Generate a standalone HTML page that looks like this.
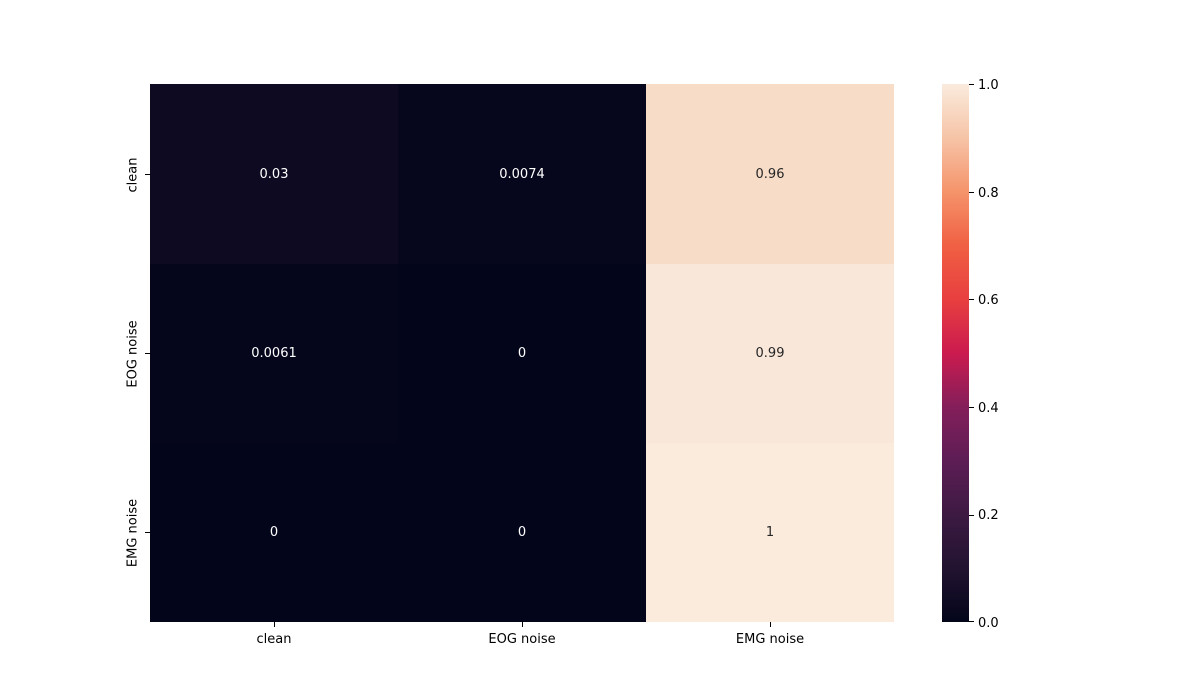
<!DOCTYPE html>
<html><head><style>
body{margin:0;width:1200px;height:700px;background:#fff;position:relative;font-family:"DejaVu Sans","Liberation Sans",sans-serif;font-size:13px;color:#000;overflow:hidden}
.c{position:absolute;display:flex;align-items:center;justify-content:center}
.t{position:absolute;white-space:nowrap}
.tk{position:absolute;background:#000}
</style></head><body>
<div class="c" style="left:150px;top:84px;width:248px;height:180px;background:#0d0a21;color:#fff">0.03</div>
<div class="c" style="left:398px;top:84px;width:248px;height:180px;background:#06061c;color:#fff">0.0074</div>
<div class="c" style="left:646px;top:84px;width:248px;height:180px;background:#f7dcc8;color:#262626">0.96</div>
<div class="c" style="left:150px;top:264px;width:248px;height:179px;background:#05061c;color:#fff">0.0061</div>
<div class="c" style="left:398px;top:264px;width:248px;height:179px;background:#03051a;color:#fff">0</div>
<div class="c" style="left:646px;top:264px;width:248px;height:179px;background:#f9e7da;color:#262626">0.99</div>
<div class="c" style="left:150px;top:443px;width:248px;height:179px;background:#03051a;color:#fff">0</div>
<div class="c" style="left:398px;top:443px;width:248px;height:179px;background:#03051a;color:#fff">0</div>
<div class="c" style="left:646px;top:443px;width:248px;height:179px;background:#faebdd;color:#262626">1</div>

<div class="tk" style="left:145px;top:174px;width:5px;height:1px"></div>
<div class="tk" style="left:145px;top:353px;width:5px;height:1px"></div>
<div class="tk" style="left:145px;top:532px;width:5px;height:1px"></div>
<div class="t" style="left:133px;top:175px;transform:translate(-50%,-50%) rotate(-90deg)">clean</div>
<div class="t" style="left:133px;top:354px;transform:translate(-50%,-50%) rotate(-90deg)">EOG noise</div>
<div class="t" style="left:133px;top:533px;transform:translate(-50%,-50%) rotate(-90deg)">EMG noise</div>
<div class="tk" style="left:274px;top:622px;width:1px;height:5px"></div>
<div class="tk" style="left:522px;top:622px;width:1px;height:5px"></div>
<div class="tk" style="left:770px;top:622px;width:1px;height:5px"></div>
<div class="t" style="left:274px;top:632px;transform:translateX(-50%)">clean</div>
<div class="t" style="left:522px;top:632px;transform:translateX(-50%)">EOG noise</div>
<div class="t" style="left:770px;top:632px;transform:translateX(-50%)">EMG noise</div>

<div style="position:absolute;left:942px;top:84px;width:27px;height:538px;background:linear-gradient(to top,#03051a 0%,#221331 10%,#3d1a42 20%,#5d1d55 30%,#841e5a 40%,#cb1b4f 50%,#e83f3f 60%,#f06043 70%,#f5946b 80%,#f6c4a7 90%,#faebdd 100%)"></div>
<div class="tk" style="left:969px;top:84px;width:5px;height:1px"></div>
<div class="tk" style="left:969px;top:192px;width:5px;height:1px"></div>
<div class="tk" style="left:969px;top:299px;width:5px;height:1px"></div>
<div class="tk" style="left:969px;top:407px;width:5px;height:1px"></div>
<div class="tk" style="left:969px;top:515px;width:5px;height:1px"></div>
<div class="tk" style="left:969px;top:621px;width:5px;height:1px"></div>
<div class="t" style="left:978px;top:78px">1.0</div>
<div class="t" style="left:978px;top:186px">0.8</div>
<div class="t" style="left:978px;top:293px">0.6</div>
<div class="t" style="left:978px;top:401px">0.4</div>
<div class="t" style="left:978px;top:508px">0.2</div>
<div class="t" style="left:978px;top:616px">0.0</div>
</body></html>
